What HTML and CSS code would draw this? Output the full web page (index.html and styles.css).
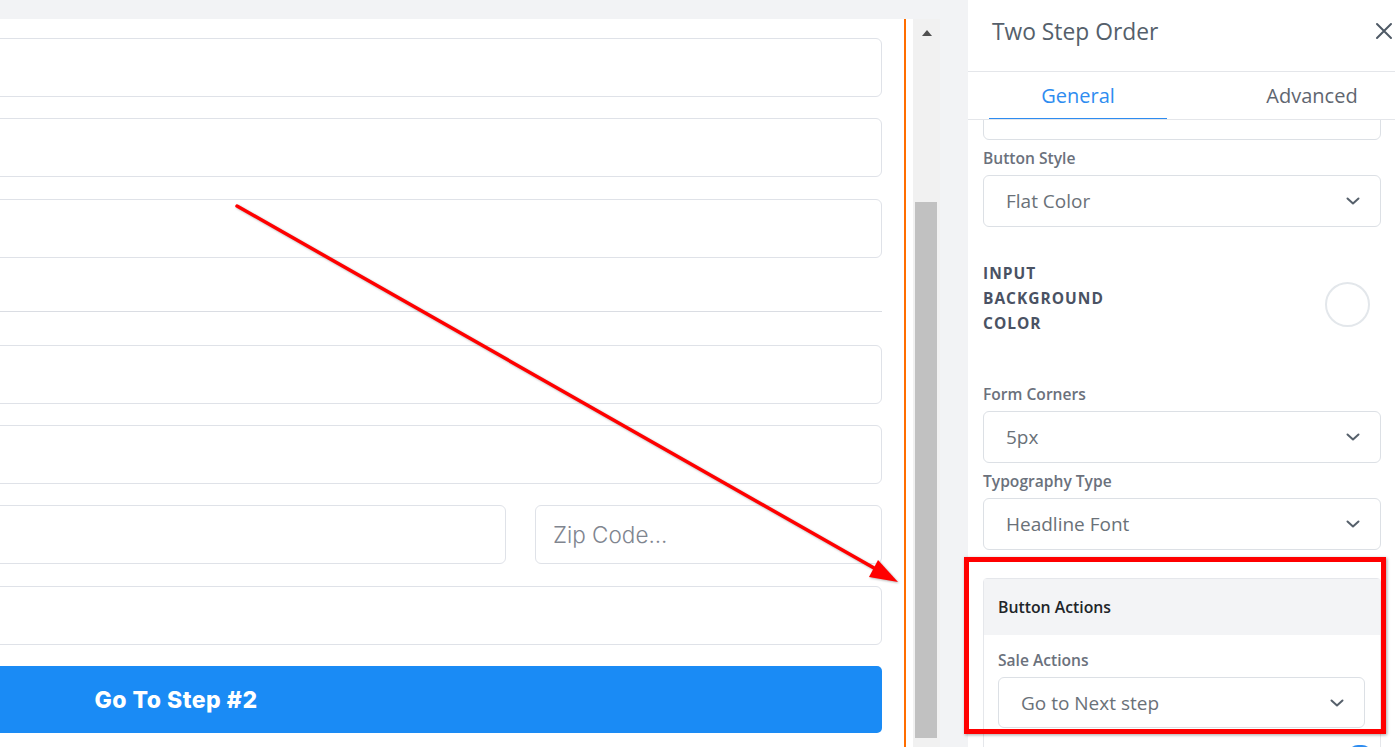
FILE: index.html
```html
<!DOCTYPE html>
<html lang="en">

<head>
	<meta charset="UTF-8">
	<meta name="viewport" content="width=device-width, initial-scale=1.0">
	<title>Two Step Order</title>
	<link rel="stylesheet" href="styles.css">
</head>

<body>
	<div class="app">
		<div class="stage">
			<div class="viewport">
				<div class="canvas">
					<div class="order-form">
						<div class="field"></div>
						<div class="field"></div>
						<div class="field"></div>
						<div class="divider"></div>
						<div class="field"></div>
						<div class="field"></div>
						<div class="field-row">
							<div class="field"></div>
							<div class="field"><span class="placeholder">Zip Code...</span></div>
						</div>
						<div class="field"></div>
						<div class="step-button">Go To Step #2</div>
					</div>
				</div>
				<div class="canvas-edge"></div>
				<div class="scrollbar">
					<span class="scroll-arrow"></span>
					<div class="scroll-thumb"></div>
				</div>
			</div>
		</div>

		<aside class="panel">
			<div class="panel-header">
				<h1 class="panel-title">Two Step Order</h1>
				<svg class="close-icon" width="18" height="18" viewBox="0 0 18 18">
					<path d="M2 2 L16 16 M16 2 L2 16" stroke="#4f5a66" stroke-width="2" stroke-linecap="round" fill="none" />
				</svg>
			</div>
			<div class="tabs">
				<div class="tab active">General</div>
				<div class="tab">Advanced</div>
			</div>

			<div class="panel-body">
				<div class="select stub"></div>

				<div class="label">Button Style</div>
				<div class="select">
					<span>Flat Color</span>
					<svg class="chevron" width="14" height="8" viewBox="0 0 14 8"><path d="M1.5 1.5 L7 6.5 L12.5 1.5" /></svg>
				</div>

				<div class="color-row">
					<div class="color-label">INPUT BACKGROUND COLOR</div>
					<div class="color-swatch"></div>
				</div>

				<div class="label spaced">Form Corners</div>
				<div class="select">
					<span>5px</span>
					<svg class="chevron" width="14" height="8" viewBox="0 0 14 8"><path d="M1.5 1.5 L7 6.5 L12.5 1.5" /></svg>
				</div>

				<div class="label">Typography Type</div>
				<div class="select">
					<span>Headline Font</span>
					<svg class="chevron" width="14" height="8" viewBox="0 0 14 8"><path d="M1.5 1.5 L7 6.5 L12.5 1.5" /></svg>
				</div>

				<div class="card">
					<div class="card-header">Button Actions</div>
					<div class="card-body">
						<div class="label">Sale Actions</div>
						<div class="select">
							<span>Go to Next step</span>
							<svg class="chevron" width="14" height="8" viewBox="0 0 14 8"><path d="M1.5 1.5 L7 6.5 L12.5 1.5" /></svg>
						</div>
						<div class="toggle-row"><span class="toggle"></span></div>
					</div>
				</div>
			</div>
		</aside>

		<!-- annotations drawn over the screenshot -->
		<svg class="annotation-arrow" width="1395" height="747" viewBox="0 0 1395 747">
			<line x1="237" y1="206" x2="874" y2="568" stroke="#ff0000" stroke-width="3.5" stroke-linecap="round" />
			<polygon points="898,582 878,560 869,577" fill="#ff0000" />
		</svg>
		<div class="highlight-box"></div>
	</div>
</body>

</html>
```

FILE: styles.css
```css
*,
*::before,
*::after {
	box-sizing: border-box;
}

body {
	margin: 0;
	background-color: #f2f3f5;
	font-family: "Open Sans", "Liberation Sans", sans-serif;
	overflow: hidden;
}

.app {
	position: relative;
	display: flex;
	height: 747px;
}

/* left: page canvas */

.stage {
	width: 940px;
	padding-top: 19px;
	margin-right: 28px;
}

.viewport {
	display: flex;
	height: 728px;
	background-color: #ffffff;
}

.canvas {
	width: 904px;
	display: flex;
	justify-content: flex-end;
	overflow: hidden;
	padding-top: 19px;
}

.order-form {
	width: 1412px;
	flex-shrink: 0;
	margin-right: 22px;
	display: flex;
	flex-direction: column;
}

.field {
	height: 59px;
	margin-bottom: 21.3px;
	border: 1px solid #dfe2e8;
	border-radius: 6px;
	background-color: #ffffff;
	display: flex;
	align-items: center;
}

.field-row {
	display: grid;
	grid-template-columns: 1fr 347px;
	gap: 29px;
}

.placeholder {
	padding-left: 17px;
	font-family: "Inter", sans-serif;
	font-weight: 300;
	font-size: 22.5px;
	color: #80858f;
}

.divider {
	height: 1px;
	background-color: #dadde3;
	margin: 32px 0 33px;
}

.step-button {
	height: 67px;
	border-radius: 5px;
	background-color: #1a8bf5;
	color: #ffffff;
	font-family: "Inter", sans-serif;
	font-weight: 800;
	font-size: 23px;
	letter-spacing: 0.5px;
	display: flex;
	align-items: center;
	justify-content: center;
}

.canvas-edge {
	width: 2px;
	background-color: #ff6d00;
	margin-right: 7px;
}

.scrollbar {
	width: 27px;
	background-color: #f1f1f1;
	display: flex;
	flex-direction: column;
	align-items: center;
}

.scroll-arrow {
	margin-top: 11px;
	width: 0;
	height: 0;
	border-left: 5.5px solid transparent;
	border-right: 5.5px solid transparent;
	border-bottom: 6px solid #505050;
}

.scroll-thumb {
	width: 22px;
	height: 536px;
	margin: auto 1px 9px 0;
	background-color: #c1c1c1;
}

/* right: settings panel */

.panel {
	width: 427px;
	background-color: #ffffff;
	display: flex;
	flex-direction: column;
}

.panel-header {
	height: 72px;
	flex-shrink: 0;
	border-bottom: 1px solid #e4e6ea;
	display: flex;
	align-items: center;
	justify-content: space-between;
	padding: 0 2px 9px 24px;
}

.panel-title {
	margin: 0;
	font-size: 22.8px;
	font-weight: 400;
	color: #555f6b;
}

.tabs {
	height: 48px;
	flex-shrink: 0;
	display: flex;
	gap: 56px;
	padding-left: 21px;
	border-bottom: 1px solid #e4e6ea;
	overflow: hidden;
}

.tab {
	width: 178px;
	flex-shrink: 0;
	display: flex;
	align-items: center;
	justify-content: center;
	font-size: 20px;
	color: #5f6670;
}

.tab.active {
	color: #2e8cf0;
	border-bottom: 2px solid #2e8cf0;
	margin-bottom: -1px;
}

.panel-body {
	flex: 1;
	overflow: hidden;
	padding: 0 14px 0 15px;
}

.label {
	font-size: 15.6px;
	font-weight: 600;
	line-height: 20px;
	color: #6b717c;
	margin: 8px 0 7px;
}

.label.spaced {
	margin-top: 48px;
}

.select {
	height: 52px;
	border: 1px solid #dce0e5;
	border-radius: 6px;
	display: flex;
	align-items: center;
	justify-content: space-between;
	padding: 0 20px 0 22px;
	font-size: 19px;
	color: #6a7178;
}

.select.stub {
	height: 53px;
	margin-top: -33px;
}

.chevron path {
	fill: none;
	stroke: #56606b;
	stroke-width: 2;
	stroke-linecap: round;
	stroke-linejoin: round;
}

.color-row {
	display: flex;
	align-items: center;
	justify-content: space-between;
	margin-top: 34px;
}

.color-label {
	width: 135px;
	font-size: 15.5px;
	font-weight: 700;
	line-height: 25px;
	letter-spacing: 1px;
	color: #4a5263;
}

.color-swatch {
	width: 45px;
	height: 45px;
	margin: 12px 11px 0 0;
	border: 2px solid #e3e7eb;
	border-radius: 50%;
}

.card {
	margin-top: 28px;
	border: 1px solid #e5e7eb;
	border-radius: 4px;
}

.card-header {
	height: 56px;
	background-color: #f3f4f6;
	display: flex;
	align-items: center;
	padding-left: 14px;
	font-size: 15.8px;
	font-weight: 600;
	color: #212529;
}

.card-body {
	padding: 7px 15px 0 14px;
}

.card-body .select {
	height: 51px;
}

.toggle-row {
	display: flex;
	justify-content: flex-end;
	margin: 17px -7px 0 0;
}

.toggle {
	width: 24px;
	height: 20px;
	border-radius: 10px;
	background-color: #2e8cf0;
}

/* annotations */

.annotation-arrow {
	position: absolute;
	left: 0;
	top: 0;
	pointer-events: none;
	filter: drop-shadow(1px 1px 1px rgba(0, 0, 0, 0.3));
}

.highlight-box {
	position: absolute;
	left: 964px;
	top: 557px;
	width: 422px;
	height: 177px;
	border: 5px solid #ff0000;
	box-shadow: 1px 1px 3px rgba(0, 0, 0, 0.35);
	pointer-events: none;
}
```
